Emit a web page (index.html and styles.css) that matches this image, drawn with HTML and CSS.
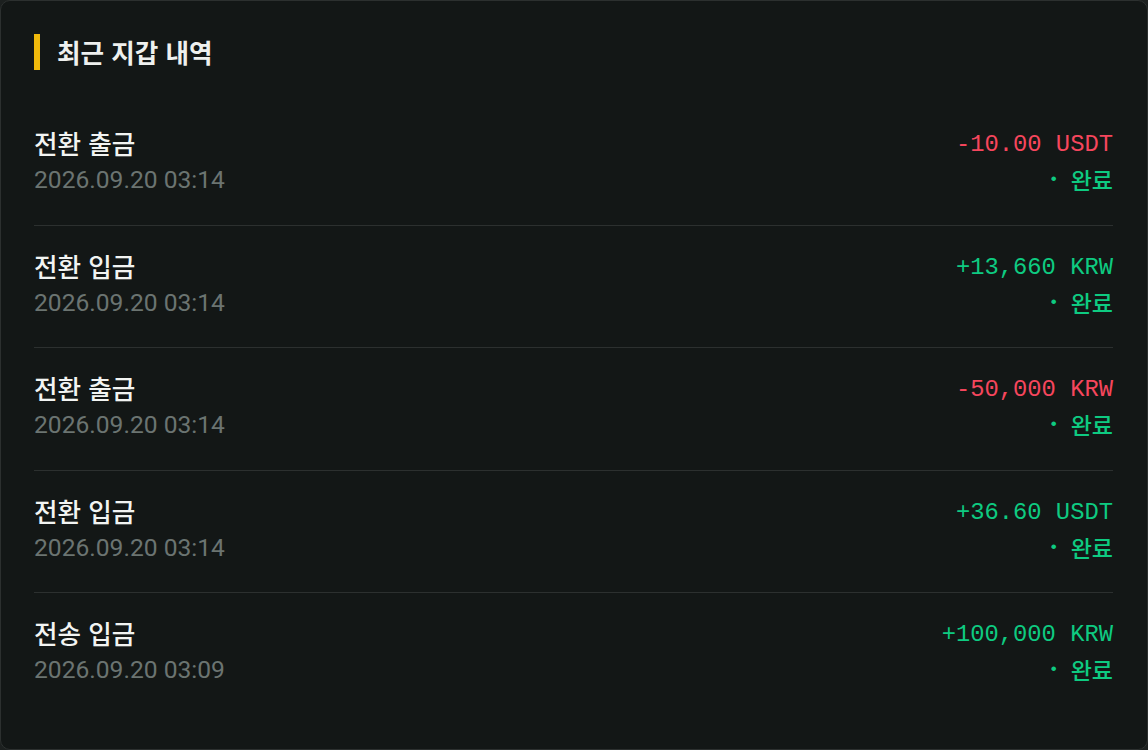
FILE: index.html
```html
<!DOCTYPE html>
<html lang="ko">
<head>
<meta charset="utf-8">
<title>최근 지갑 내역</title>
<link rel="stylesheet" href="styles.css">
</head>
<body>
<section class="card">
  <h2 class="card-title">최근 지갑 내역</h2>
  <ul class="tx-list">
    <li class="tx">
      <div class="tx-left">
        <div class="tx-name">전환 출금</div>
        <div class="tx-date">2026.09.20 03:14</div>
      </div>
      <div class="tx-right">
        <div class="tx-amount neg">-10.00 USDT</div>
        <div class="tx-status"><span class="dot">•</span>완료</div>
      </div>
    </li>
    <li class="tx">
      <div class="tx-left">
        <div class="tx-name">전환 입금</div>
        <div class="tx-date">2026.09.20 03:14</div>
      </div>
      <div class="tx-right">
        <div class="tx-amount pos">+13,660 KRW</div>
        <div class="tx-status"><span class="dot">•</span>완료</div>
      </div>
    </li>
    <li class="tx">
      <div class="tx-left">
        <div class="tx-name">전환 출금</div>
        <div class="tx-date">2026.09.20 03:14</div>
      </div>
      <div class="tx-right">
        <div class="tx-amount neg">-50,000 KRW</div>
        <div class="tx-status"><span class="dot">•</span>완료</div>
      </div>
    </li>
    <li class="tx">
      <div class="tx-left">
        <div class="tx-name">전환 입금</div>
        <div class="tx-date">2026.09.20 03:14</div>
      </div>
      <div class="tx-right">
        <div class="tx-amount pos">+36.60 USDT</div>
        <div class="tx-status"><span class="dot">•</span>완료</div>
      </div>
    </li>
    <li class="tx">
      <div class="tx-left">
        <div class="tx-name">전송 입금</div>
        <div class="tx-date">2026.09.20 03:09</div>
      </div>
      <div class="tx-right">
        <div class="tx-amount pos">+100,000 KRW</div>
        <div class="tx-status"><span class="dot">•</span>완료</div>
      </div>
    </li>
  </ul>
</section>
</body>
</html>
```

FILE: styles.css
```css
html, body {
  margin: 0;
  padding: 0;
  background: #1c201f;
}

body {
  width: 1148px;
  height: 750px;
  font-family: "Noto Sans CJK KR", "Noto Sans", sans-serif;
}

.card {
  box-sizing: border-box;
  width: 1148px;
  height: 750px;
  background: #131716;
  border: 1px solid #2c302f;
  border-radius: 10px;
  padding: 33px 34px 0 33px;
}

.card-title {
  margin: 0 0 33px 0;
  height: 36px;
  display: flex;
  align-items: center;
  gap: 17px;
  font-size: 25.6px;
  font-weight: 700;
  color: #eef0ee;
  line-height: 34px;
}

.card-title::before {
  content: "";
  flex: none;
  width: 6px;
  height: 36px;
  background: #f0b90b;
}

.tx-list {
  list-style: none;
  margin: 0;
  padding: 0;
}

.tx {
  display: flex;
  justify-content: space-between;
  padding: 21px 0 26.5px 0;
  border-bottom: 1px solid #2c302f;
}

.tx:last-child {
  border-bottom: none;
}

.tx-name {
  font-size: 25.6px;
  font-weight: 500;
  line-height: 37px;
  color: #f2f4f2;
}

.tx-date {
  font-family: Roboto, "Noto Sans", sans-serif;
  font-size: 24.6px;
  line-height: 37px;
  color: #6b7471;
}

.tx-right {
  display: flex;
  flex-direction: column;
  align-items: flex-end;
}

.tx-amount {
  font-family: "Liberation Mono", monospace;
  font-size: 23.8px;
  line-height: 42px;
}

.neg { color: #f6465d; }
.pos { color: #0ecb81; }

.tx-status {
  font-size: 23px;
  font-weight: 500;
  line-height: 26px;
  color: #0ecb81;
  display: flex;
  align-items: center;
}

.dot {
  font-family: "Liberation Sans", sans-serif;
  font-size: 17px;
  margin-right: 14px;
}
```
